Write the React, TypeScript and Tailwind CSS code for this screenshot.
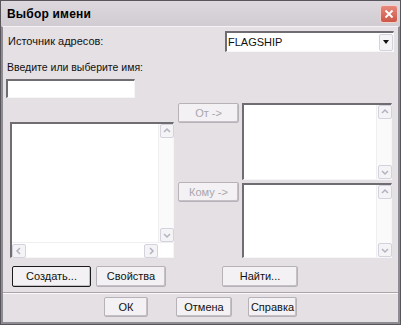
import React from 'react';

type Dir = 'up' | 'down' | 'left' | 'right';

const arrowPath: Record<Dir, string> = {
  up: 'M3 7 L6 4 L9 7',
  down: 'M3 5 L6 8 L9 5',
  left: 'M7 3 L4 6 L7 9',
  right: 'M5 3 L8 6 L5 9',
};

const ScrollBtn: React.FC<{ dir: Dir }> = ({ dir }) => (
  <div className="flex h-[14px] w-[14px] items-center justify-center rounded-[2px] border border-[#d4d2dc] bg-[#f4f4f6]">
    <svg width="12" height="12" viewBox="0 0 12 12">
      <path d={arrowPath[dir]} fill="none" stroke="#b4b2c0" strokeWidth="1.5" />
    </svg>
  </div>
);

const VScroll: React.FC = () => (
  <div className="flex w-[15px] flex-col justify-between border-l border-[#efeff2] bg-[#fafafa] pl-[1px]">
    <ScrollBtn dir="up" />
    <ScrollBtn dir="down" />
  </div>
);

const Button: React.FC<{ label: string; w: string; def?: boolean; disabled?: boolean }> = ({ label, w, def, disabled }) => (
  <div
    className={`flex items-center justify-center rounded-[2px] border bg-[#f3f1f3] text-[11px] shadow-[inset_-1px_-1px_0_#c4c0c6] ${w} ${
      def ? 'border-[#1c1c1c]' : 'border-[#b6b2b8]'
    } ${disabled ? 'text-[#a8a6ae]' : 'text-[#111]'}`}
  >
    {label}
  </div>
);

const ListBox: React.FC<{ w: string; h: string; hscroll?: boolean }> = ({ w, h, hscroll }) => (
  <div className={`flex flex-col border-l-2 border-t-2 border-[#6f6d72] border-b border-r border-b-[#f6f6f6] border-r-[#f6f6f6] bg-white ${w} ${h}`}>
    <div className="flex flex-1">
      <div className="flex-1" />
      <VScroll />
    </div>
    {hscroll && (
      <div className="flex h-[15px] justify-between border-t border-[#efeff2] pr-[15px] pt-[1px]">
        <ScrollBtn dir="left" />
        <ScrollBtn dir="right" />
      </div>
    )}
  </div>
);

export default function App() {
  return (
    <div className="h-[325px] w-[401px] overflow-hidden bg-[#e4e0e4] font-['Liberation_Sans',Arial,sans-serif] text-[#111]">
      <div className="flex h-full flex-col border border-[#58565a]">
        {/* title */}
        <div className="flex h-[25px] items-center justify-between bg-gradient-to-b from-[#dcd8de] to-[#d0ccd2] pl-[6px] pr-[2px]">
          <span className="text-[12px] font-bold tracking-[0.2px] text-black">Выбор имени</span>
          <div className="flex h-[18px] w-[18px] items-center justify-center rounded-[3px] border border-[#f2d0cc] bg-gradient-to-b from-[#e6897c] to-[#cc5648]">
            <svg width="10" height="10" viewBox="0 0 10 10">
              <path d="M1.5 1.5 L8.5 8.5 M8.5 1.5 L1.5 8.5" stroke="#fff" strokeWidth="1.8" />
            </svg>
          </div>
        </div>
        <div className="flex flex-1 flex-col border-x-2 border-b-2 border-[#8e8c92] border-t border-t-[#f4f2f4]">
          {/* source row */}
          <div className="mt-[4px] flex items-center justify-between pl-[5px] pr-[4px]">
            <span className="text-[11px]">Источник адресов:</span>
            <div className="flex h-[21px] w-[169px] items-center border-l-2 border-t-2 border-[#6f6d72] border-b border-r border-b-[#f6f6f6] border-r-[#f6f6f6] bg-white pl-[1px]">
              <span className="flex-1 text-[11px]">FLAGSHIP</span>
              <div className="flex h-[17px] w-[14px] items-center justify-center rounded-[2px] border border-[#d4d2dc] bg-[#f4f4f6]">
                <svg width="8" height="6" viewBox="0 0 8 6">
                  <path d="M1 1 L7 1 L4 5 Z" fill="#111" />
                </svg>
              </div>
            </div>
          </div>
          <div className="mt-[8px] pl-[4px] text-[10.5px]">Введите или выберите имя:</div>
          <div className="ml-[3px] mt-[3px] h-[19px] w-[129px] border-l-2 border-t-2 border-[#6f6d72] border-b border-r border-b-[#f6f6f6] border-r-[#f6f6f6] bg-white" />
          {/* main */}
          <div className="mt-[5px] flex pl-[7px]">
            <div className="pt-[19px]">
              <ListBox w="w-[164px]" h="h-[136px]" hscroll />
            </div>
            <div className="ml-[4px] flex w-[61px] flex-col gap-[59px]">
              <Button label="От ->" w="w-[61px] h-[20px]" disabled />
              <Button label="Кому ->" w="w-[61px] h-[20px]" disabled />
            </div>
            <div className="ml-[3px] flex flex-col gap-[3px]">
              <ListBox w="w-[150px]" h="h-[77px]" />
              <ListBox w="w-[150px]" h="h-[75px]" />
            </div>
          </div>
          {/* action row */}
          <div className="mt-[8px] flex pl-[9px]">
            <Button label="Создать..." w="w-[79px] h-[21px]" def />
            <Button label="Свойства" w="ml-[5px] w-[70px] h-[21px]" />
            <Button label="Найти..." w="ml-[56px] w-[76px] h-[21px]" />
          </div>
          <div className="mt-[5px] border-t border-[#a9a6aa] shadow-[0_1px_0_#faf8fa]" />
          <div className="mt-[4px] flex pl-[101px]">
            <Button label="ОК" w="w-[44px] h-[20px]" />
            <Button label="Отмена" w="ml-[28px] w-[56px] h-[20px]" />
            <Button label="Справка" w="ml-[16px] w-[49px] h-[20px]" />
          </div>
        </div>
      </div>
    </div>
  );
}
